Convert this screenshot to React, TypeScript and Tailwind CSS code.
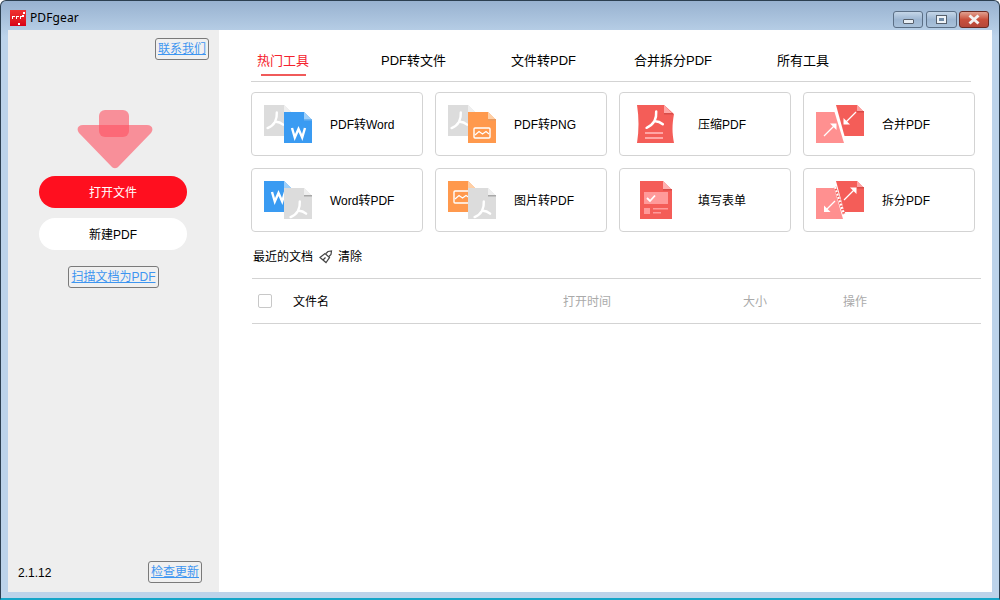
import React from 'react';

const FONT = '"Liberation Sans", "Noto Sans CJK SC", sans-serif';

function PdfMark({ x, y, s = 1 }: { x: number; y: number; s?: number }) {
  return (
    <g transform={`translate(${x} ${y}) scale(${s})`}>
      <path d="M8.500 0.500C8.800 4 7.800 6.800 7 8.500C5.500 11 3 13 0.500 14M7 8.500C9.500 8.300 12 9.300 14 11" fill="none" stroke="#fff" strokeWidth="2.100" strokeLinecap="round" />
    </g>
  );
}

function Fold({ x, size, light, dark }: { x: number; size: number; light: string; dark: string }) {
  return (
    <>
      <path d={`M${x} 0L${x + size} ${size}H${x}Z`} fill={light} />
      <rect x={x} y={size - 1} width={size} height="1.500" fill={dark} />
    </>
  );
}

// back docs sit behind another page, so their glyph is placed higher up
function GrayDoc({ x, y, back = false }: { x: number; y: number; back?: boolean }) {
  return (
    <g transform={`translate(${x} ${y})`}>
      <path d="M0 0H20L28 8V31H0Z" fill="#dcdcdc" />
      <Fold x={20} size={8} light="#efefef" dark="#a8a8a8" />
      {back ? <PdfMark x={3} y={7} s={1.150} /> : <PdfMark x={6} y={13} s={1.150} />}
    </g>
  );
}

function BlueDoc({ x, y, back = false }: { x: number; y: number; back?: boolean }) {
  return (
    <g transform={`translate(${x} ${y - (back ? 5 : 0)})`}>
      <path d={back ? 'M0 5H20L28 13V36H0Z' : 'M0 0H20L28 8V31H0Z'} fill="#3a9bf2" />
      <g transform={back ? 'translate(0 5)' : undefined}>
        <Fold x={20} size={8} light="#9fd0fa" dark="#6fb4f0" />
      </g>
      <path d="M8 16L10.800 25.500L14.500 17L18.200 25.500L21 16" fill="none" stroke="#fff" strokeWidth="2.400" />
    </g>
  );
}

function OrangeDoc({ x, y, back = false }: { x: number; y: number; back?: boolean }) {
  return (
    <g transform={`translate(${x} ${y})`}>
      <path d="M0 0H20L28 8V31H0Z" fill="#ff994d" />
      <Fold x={20} size={8} light="#ffcfa6" dark="#e89a5e" />
      {back ? (
        <>
          <rect x="6" y="10" width="17" height="12" rx="1" fill="none" stroke="#fff" strokeWidth="1.400" />
          <path d="M7 18L11 14.500L14.500 17L18 14.500L22 17" fill="none" stroke="#fff" strokeWidth="1.200" />
        </>
      ) : (
        <>
          <rect x="6" y="16" width="16" height="10" rx="1" fill="none" stroke="#fff" strokeWidth="1.400" />
          <path d="M7 23L11 19.500L14.500 22L18 19.500L21 22" fill="none" stroke="#fff" strokeWidth="1.200" />
        </>
      )}
    </g>
  );
}

function Icon48({ children }: { children: React.ReactNode }) {
  return (
    <svg width="48" height="38" viewBox="0 0 48 38" className="shrink-0">
      {children}
    </svg>
  );
}

function Arrow({ d, head }: { d: string; head: string }) {
  return (
    <>
      <path d={d} fill="none" stroke="#fff" strokeWidth="1.300" />
      <path d={head} fill="#fff" />
    </>
  );
}

const tools = [
  {
    label: 'PDF转Word',
    icon: (
      <Icon48>
        <GrayDoc x={0} y={0} back />
        <BlueDoc x={20} y={7} />
      </Icon48>
    ),
  },
  {
    label: 'PDF转PNG',
    icon: (
      <Icon48>
        <GrayDoc x={0} y={0} back />
        <OrangeDoc x={20} y={7} />
      </Icon48>
    ),
  },
  {
    label: '压缩PDF',
    icon: (
      <Icon48>
        <path d="M5 0H32L42 9C40 20 40 28 42 38H5C7 25 7 13 5 0Z" fill="#f45d58" />
        <Fold x={32} size={9} light="#ffa5a5" dark="#d84c48" />
        <PdfMark x={14} y={6} s={1.200} />
        <rect x="13" y="27" width="18" height="2" fill="#ffa5a5" />
        <rect x="13" y="32" width="18" height="2" fill="#ffa5a5" />
      </Icon48>
    ),
  },
  {
    label: '合并PDF',
    icon: (
      <Icon48>
        <path d="M20 0H41L48 7V31H28.500Z" fill="#f45d58" />
        <Fold x={41} size={7} light="#ffa0a0" dark="#d84c48" />
        <path d="M0 7H18.500L28 38H0Z" fill="#ff9090" />
        <Arrow d="M8 31L18 21" head="M20.500 18.500V25L14 18.500Z" />
        <Arrow d="M40 7L30 17" head="M27.500 19.500V13L34 19.500Z" />
      </Icon48>
    ),
  },
  {
    label: 'Word转PDF',
    icon: (
      <Icon48>
        <BlueDoc x={0} y={0} back />
        <GrayDoc x={20} y={7} />
      </Icon48>
    ),
  },
  {
    label: '图片转PDF',
    icon: (
      <Icon48>
        <OrangeDoc x={0} y={0} back />
        <GrayDoc x={20} y={7} />
      </Icon48>
    ),
  },
  {
    label: '填写表单',
    icon: (
      <Icon48>
        <path d="M8 0H31L40 9V38H8Z" fill="#f45d58" />
        <Fold x={31} size={9} light="#ffb0b0" dark="#d84c48" />
        <rect x="12" y="11" width="24" height="12" fill="#ff9a9a" />
        <path d="M15 17L18 20L23 14.500" fill="none" stroke="#fff" strokeWidth="1.800" />
        <rect x="12" y="27" width="6" height="6" fill="#ff9a9a" />
        <rect x="21" y="27" width="15" height="1.500" fill="#ff9a9a" />
        <rect x="21" y="31" width="8" height="1.500" fill="#ff9a9a" />
      </Icon48>
    ),
  },
  {
    label: '拆分PDF',
    icon: (
      <Icon48>
        <path d="M20 0H41L48 7V31H28.500Z" fill="#f45d58" />
        <Fold x={41} size={7} light="#ffa0a0" dark="#d84c48" />
        <path d="M0 7H18L27 38H0Z" fill="#ff9090" />
        <path d="M19 6L28 33" stroke="#f45d58" strokeWidth="2.600" />
        <path d="M19 6L28 33" stroke="#fff" strokeWidth="2.200" strokeDasharray="2 1.500" />
        <Arrow d="M19 20L10 29" head="M8 31V24.500L14.500 31Z" />
        <Arrow d="M28 19L38 9" head="M40.500 6.500V13L34 6.500Z" />
      </Icon48>
    ),
  },
];

function LinkButton({ label, className = '' }: { label: string; className?: string }) {
  return (
    <button className={`h-[22px] rounded-[3px] border border-[#7a7a7a] bg-[#f0f0f0] px-[2px] pt-[1px] text-[12px] leading-[19px] text-[#3d95f0] underline ${className}`}>
      {label}
    </button>
  );
}

function WinButton({ width, variant, className = '' }: { width: string; variant: 'min' | 'max' | 'close'; className?: string }) {
  const bg =
    variant === 'close'
      ? 'bg-gradient-to-b from-[#e0a090] via-[#c9503c] to-[#b5483a] border-[#6b2a22]'
      : 'bg-gradient-to-b from-[#c5d6e8] via-[#9db6d2] to-[#a9c1da] border-[#5b6f86]';
  return (
    <div className={`flex h-[17px] items-center justify-center rounded-[3px] border ${width} ${bg} ${className}`}>
      {variant === 'min' && <div className="mt-[4px] h-[5px] w-[11px] rounded-[1px] border border-[#57606c] bg-[#e8eef4]" />}
      {variant === 'max' && (
        <div className="flex h-[9px] w-[11px] items-center justify-center border border-[#57606c] bg-[#eef3f8]">
          <div className="h-[3px] w-[5px] bg-[#6f8aa6]" />
        </div>
      )}
      {variant === 'close' && (
        <svg width="12" height="11" viewBox="0 0 12 11">
          <path d="M1.500 1.500L10.500 9.500M10.500 1.500L1.500 9.500" stroke="#f3f3f3" strokeWidth="3" />
        </svg>
      )}
    </div>
  );
}

export default function App() {
  return (
    <div
      className="flex h-[600px] w-[1000px] flex-col overflow-hidden rounded-t-[6px] border border-b-2 border-[#2c3f50] border-b-[#15a5c8] bg-gradient-to-b from-[#98b2d0] via-[#bcd3ea] via-[6%] to-[#bcd3ea] text-[12px] text-black"
      style={{ fontFamily: FONT }}
    >
      <div className="flex h-[29px] shrink-0 items-center pl-[9px] pr-[10px] pt-[5px]">
        <div className="relative h-[16px] w-[16px] bg-gradient-to-b from-[#f03030] to-[#d80018]">
          <svg width="16" height="16" viewBox="0 0 16 16" className="absolute inset-0">
            <path d="M2 6h3v1h-3zM2 7h1v2h-1zM6 6h3v1h-3zM6 7h1v2h-1zM10 6h3v1h-3zM10 7h1v2h-1zM13 2h2v2h-2zM12 5h2v2h-2zM8 13h2v2h-2z" fill="#fff" />
          </svg>
        </div>
        <span className="ml-[4px] tracking-[0.1px]" style={{ fontFamily: '"Noto Sans", sans-serif' }}>PDFgear</span>
        <div className="ml-auto flex gap-[3px] pt-[2px]">
          <WinButton width="w-[30px]" variant="min" />
          <WinButton width="w-[31px]" variant="max" />
          <WinButton width="w-[30px]" variant="close" className="ml-[-1px]" />
        </div>
      </div>

      <div className="mx-[7px] mb-[6px] flex min-h-0 flex-1 bg-white">
        <aside className="flex w-[211px] shrink-0 flex-col items-center bg-[#eeeeee] pb-[9px] pt-[8px]">
          <LinkButton label="联系我们" className="mr-[10px] self-end" />
          <svg width="76" height="60" viewBox="0 0 76 60" className="ml-[2px] mt-[50px] shrink-0">
            <path d="M6 15H70C75 15 77 19 74 23L42 56C39.500 59 36.500 59 34 56L2 23C-1 19 1 15 6 15Z" fill="#ff5060" fillOpacity="0.6" />
            <rect x="22" y="0" width="30" height="27" rx="6" fill="#ff5060" fillOpacity="0.6" />
          </svg>
          <button className="mr-[1px] mt-[6px] h-[32px] w-[148px] rounded-full bg-[#ff0f1f] pt-[1px] text-white">打开文件</button>
          <button className="mr-[1px] mt-[10px] h-[32px] w-[148px] rounded-full bg-white pt-[1px]">新建PDF</button>
          <LinkButton label="扫描文档为PDF" className="mt-[16px]" />
          <div className="mt-auto flex w-full items-center justify-between pl-[10px] pr-[17px]">
            <span className="pt-[1px]">2.1.12</span>
            <LinkButton label="检查更新" />
          </div>
        </aside>

        <main className="min-w-0 flex-1 pl-[32px]">
          <div className="mr-[21px] flex h-[52px] items-start border-b border-[#d3d3d3] pl-[6px] pt-[22px] text-[13px] leading-[18px]">
            <div className="w-[124px] shrink-0">
              <div className="text-[#f5222d]">热门工具</div>
              <div className="ml-[4px] mt-[4px] h-[2px] w-[45px] bg-[#f05a5a]" />
            </div>
            <div className="w-[130px] shrink-0">PDF转文件</div>
            <div className="w-[123px] shrink-0">文件转PDF</div>
            <div className="w-[143px] shrink-0">合并拆分PDF</div>
            <div>所有工具</div>
          </div>

          <div className="mt-[10px] grid w-[724px] grid-cols-4 gap-[12px]">
            {tools.map((tool) => (
              <div key={tool.label} className="flex h-[64px] items-center rounded-[4px] border border-[#d3d3d3] bg-white pl-[12px]">
                {tool.icon}
                <span className="ml-[18px] pt-[1px]">{tool.label}</span>
              </div>
            ))}
          </div>

          <div className="ml-[2px] mt-[17px] flex h-[16px] items-center">
            <span>最近的文档</span>
            <svg width="14" height="14" viewBox="0 0 14 14" className="ml-[6px]">
              <path d="M1 7.500L6 3.500L10.500 7.500L7 12.500Z" fill="none" stroke="#444" strokeWidth="1.200" />
              <path d="M7 3.500L9 1.500L12.500 1L12 4.500L10 6.500" fill="none" stroke="#444" strokeWidth="1.200" />
              <path d="M4 10L6.500 7.500" fill="none" stroke="#444" strokeWidth="1.200" />
            </svg>
            <span className="ml-[5px]">清除</span>
          </div>

          <div className="ml-[1px] mr-[11px] mt-[13px] flex h-[46px] items-center border-y border-[#d3d3d3] pl-[6px]">
            <div className="h-[14px] w-[14px] rounded-[2px] border border-[#c8c8c8] bg-white" />
            <div className="ml-[21px] w-[270px] pt-[1px]">文件名</div>
            <div className="w-[180px] pt-[1px] text-[#aaaaaa]">打开时间</div>
            <div className="w-[100px] pt-[1px] text-[#aaaaaa]">大小</div>
            <div className="pt-[1px] text-[#aaaaaa]">操作</div>
          </div>
        </main>
      </div>
    </div>
  );
}
